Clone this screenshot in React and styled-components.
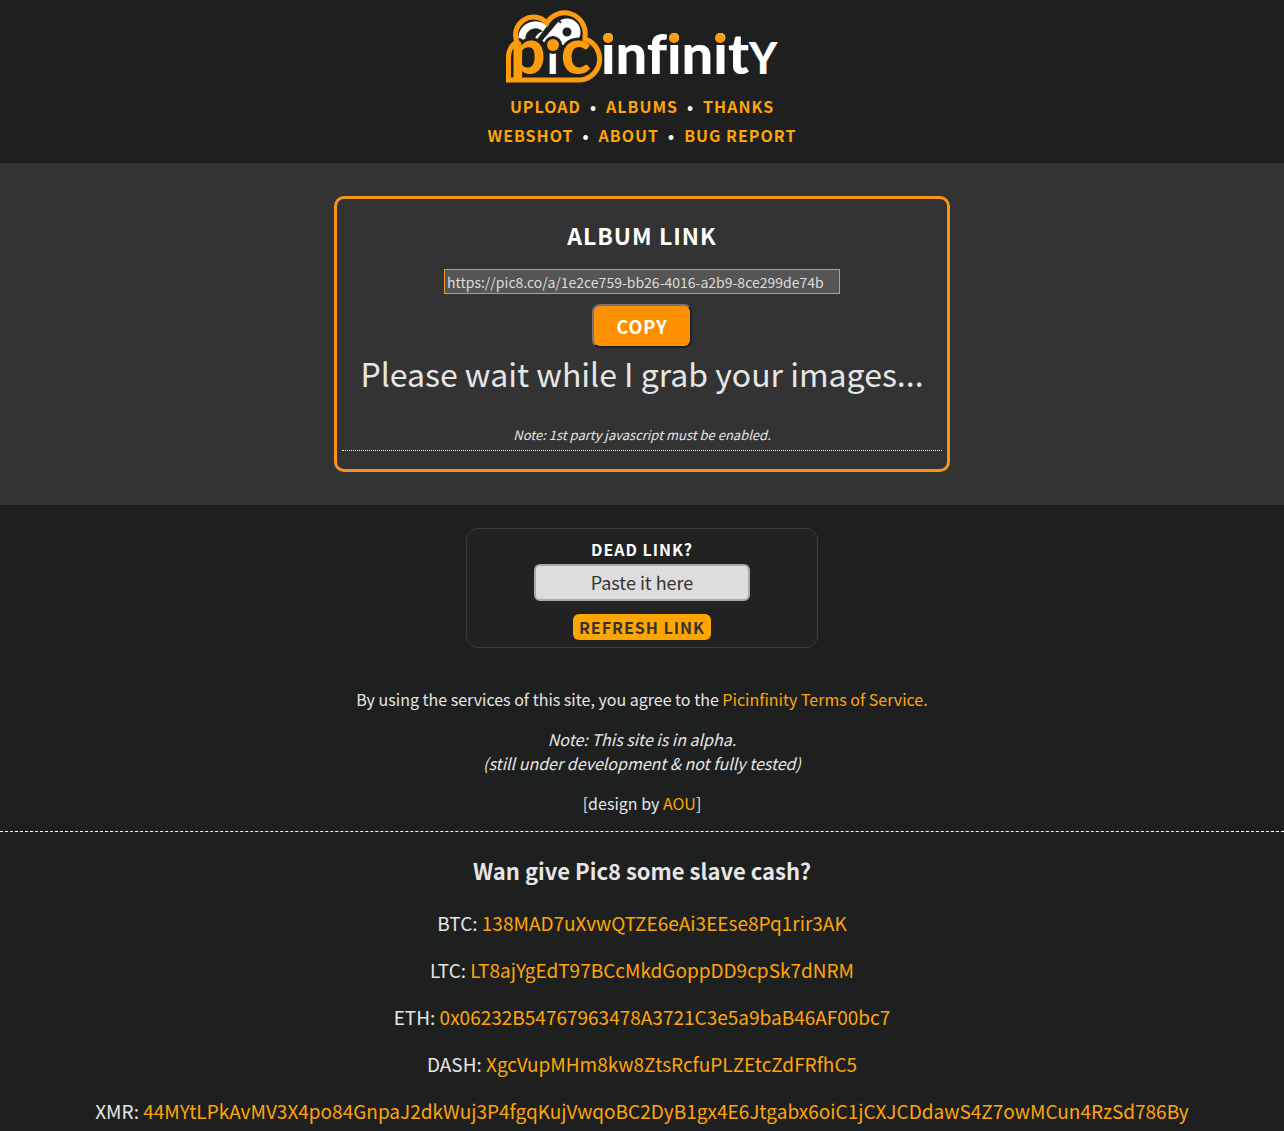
import React from 'react';
import styled, { createGlobalStyle } from 'styled-components';

const GlobalStyle = createGlobalStyle`
    * {
        box-sizing: border-box;
    }

    body {
        margin: 0;
        background: #1e201f;
        color: #e6e6e6;
        font-family: "Noto Sans CJK JP", "Noto Sans", sans-serif;
        font-size: 16px;
        line-height: 24px;
        text-align: center;
        overflow-x: hidden;
    }

    button, input {
        font-family: inherit;
    }

    a {
        color: #ffa50a;
        text-decoration: none;
    }
`;

const navRows = [
    ['Upload', 'Albums', 'Thanks'],
    ['Webshot', 'About', 'Bug Report'],
];

const coins = [
    { name: 'BTC', address: '138MAD7uXvwQTZE6eAi3EEse8Pq1rir3AK' },
    { name: 'LTC', address: 'LT8ajYgEdT97BCcMkdGoppDD9cpSk7dNRM' },
    { name: 'ETH', address: '0x06232B54767963478A3721C3e5a9baB46AF00bc7' },
    { name: 'DASH', address: 'XgcVupMHm8kw8ZtsRcfuPLZEtcZdFRfhC5' },
    {
        name: 'XMR',
        address: '44MYtLPkAvMV3X4po84GnpaJ2dkWuj3P4fgqKujVwqoBC2DyB1gx4E6Jtgabx6oiC1jCXJCDdawS4Z7owMCun4RzSd786By',
    },
];

const Logo = () => (
    <LogoSvg viewBox="0 0 276 76" role="img" aria-label="picinfinity">
        {/* infinity loops */}
        <g fill="none" stroke="#fff">
            <path d="M20 37 A13 13 0 0 1 43 22" strokeWidth="7" />
            <path d="M42 25 Q36 24 33 31" strokeWidth="5" />
            <circle cx="63" cy="23" r="9" strokeWidth="9" />
            <path d="M36 34 L54 10" stroke="#1e201f" strokeWidth="9" />
            <path d="M41 34 L57 15" strokeWidth="7" />
        </g>
        <PicText y="65">
            <tspan x="6">p</tspan>
            <tspan x="57">c</tspan>
            <tspan x="43" fontSize="44" fill="#fff">i</tspan>
        </PicText>
        <circle cx="49" cy="36" r="9" fill="#1e201f" />
        <circle cx="49" cy="36" r="6" fill="#ff9c0d" />
        {/* cloud */}
        <rect x="0" y="73" width="90" height="3" fill="#1e201f" />
        <path
            d="M4.5 71 V48 Q4.5 38 13 33 A18 18 0 0 1 43 14 A20.5 20.5 0 0 1 81 27 L81 30 A21 21 0 0 1 74 71 Z"
            fill="none" stroke="#ff9c0d" strokeWidth="5"
        />
        <InfinityText x="97" y="65">infinit<tspan fontSize="43">Y</tspan></InfinityText>
        <g fill="#ff9c0d">
            <circle cx="104" cy="29" r="5" />
            <circle cx="170" cy="29" r="5" />
            <circle cx="216" cy="29" r="5" />
        </g>
    </LogoSvg>
);

const App = () => {
    return (
        <>
            <GlobalStyle />
            <Header>
                <a href="#home"><Logo /></a>
                <nav>
                    {navRows.map((row) => (
                        <NavRow key={row[0]}>
                            {row.map((item) => (
                                <li key={item}><a href={`#${item}`}>{item}</a></li>
                            ))}
                        </NavRow>
                    ))}
                </nav>
            </Header>

            <Main>
                <AlbumBox>
                    <AlbumTitle>Album Link</AlbumTitle>
                    <AlbumUrl
                        type="text"
                        aria-label="Album link"
                        readOnly
                        value="https://pic8.co/a/1e2ce759-bb26-4016-a2b9-8ce299de74b"
                    />
                    <CopyButton type="button">Copy</CopyButton>
                    <Status>Please wait while I grab your images...</Status>
                    <ScriptNote>Note: 1st party javascript must be enabled.</ScriptNote>
                </AlbumBox>
            </Main>

            <footer>
                <DeadLink>
                    <label htmlFor="dead-link">Dead Link?</label>
                    <PasteInput id="dead-link" type="text" placeholder="Paste it here" />
                    <RefreshButton type="submit">Refresh Link</RefreshButton>
                </DeadLink>
                <Legal>
                    <p>
                        By using the services of this site, you agree to the{' '}
                        <a href="#terms">Picinfinity Terms of Service.</a>
                    </p>
                    <p>
                        <em>Note: This site is in alpha.<br />(still under development &amp; not fully tested)</em>
                    </p>
                    <p>[design by <a href="#aou">AOU</a>]</p>
                </Legal>
                <Donate>
                    <h2>Wan give Pic8 some slave cash?</h2>
                    {coins.map(({ name, address }) => (
                        <p key={name}>{name}: <a href={`#${name}`}>{address}</a></p>
                    ))}
                </Donate>
            </footer>
        </>
    );
};

const Header = styled.header`
    display: flex;
    flex-direction: column;
    align-items: center;
    padding: 9px 0 13px;
`;

const LogoSvg = styled.svg`
    display: block;
    width: 276px;
    height: 76px;
    margin-bottom: 7px;
    overflow: visible;
`;

const InfinityText = styled.text`
    fill: #fff;
    font-family: Lato, sans-serif;
    font-size: 56px;
    font-weight: 900;
    font-variant-ligatures: none;
`;

const PicText = styled(InfinityText)`
    fill: #ff9c0d;
    stroke: #1e201f;
    stroke-width: 6px;
    font-size: 62px;
    paint-order: stroke;
`;

const NavRow = styled.ul`
    display: flex;
    justify-content: center;
    margin: 0;
    padding: 0;
    list-style: none;
    font-weight: bold;
    letter-spacing: 1px;
    line-height: 29px;
    text-transform: uppercase;

    li + li::before {
        content: "•";
        margin: 0 9px;
        color: #fff;
    }
`;

const Main = styled.main`
    padding: 33px 16px;
    background: #333;
`;

const AlbumBox = styled.section`
    display: flex;
    flex-direction: column;
    align-items: center;
    max-width: 616px;
    margin: 0 auto;
    padding: 18px 5px;
    border: 3px solid #f7941d;
    border-radius: 10px;
`;

const AlbumTitle = styled.h1`
    margin: 0 0 16px;
    color: #fff;
    font-size: 23px;
    letter-spacing: 1px;
    line-height: 36px;
    text-transform: uppercase;
`;

const AlbumUrl = styled.input`
    width: 396px;
    max-width: 100%;
    height: 25px;
    padding: 1px 2px;
    border: 1px solid #f7941d;
    background: #555;
    color: #ddd;
    font-size: 14px;
`;

const CopyButton = styled.button`
    width: 100px;
    height: 44px;
    margin: 10px 0 5px;
    padding: 0;
    border: 2px solid;
    border-color: #767676 #212121 #212121 #767676;
    border-radius: 8px;
    background: #ff9000;
    color: #fff;
    font-size: 18px;
    font-weight: bold;
    letter-spacing: 1px;
    text-transform: uppercase;
`;

const Status = styled.p`
    margin: 0 0 32px;
    font-size: 32px;
    line-height: 40px;
`;

const ScriptNote = styled.p`
    width: 100%;
    margin: 0;
    padding-bottom: 5px;
    border-bottom: 1px dotted #fff;
    font-size: 13px;
    font-style: italic;
    line-height: 20px;
`;

const DeadLink = styled.form`
    display: flex;
    flex-direction: column;
    align-items: center;
    max-width: 352px;
    margin: 23px auto 39px;
    padding: 8px 8px 7px;
    border: 1px solid #3c3c3c;
    border-radius: 12px;
    background: #222;

    label {
        margin-bottom: 3px;
        color: #fff;
        font-weight: bold;
        letter-spacing: 1px;
        text-transform: uppercase;
    }
`;

const PasteInput = styled.input`
    width: 216px;
    height: 37px;
    padding: 0 4px 2px;
    border: 2px solid #aaa;
    border-radius: 6px;
    background: #ddd;
    font-size: 18px;
    text-align: center;

    &::placeholder {
        color: #333;
    }
`;

const RefreshButton = styled.button`
    height: 26px;
    margin-top: 13px;
    padding: 0 6px;
    border: 0;
    border-radius: 6px;
    background: #ffa500;
    color: #333;
    font-size: 16px;
    font-weight: bold;
    letter-spacing: 1px;
    line-height: 26px;
    text-transform: uppercase;
`;

const Legal = styled.div`
    padding: 0 8px 16px;
    border-bottom: 1px dashed #fff;

    p {
        margin: 0 0 16px;
    }

    p:last-child {
        margin: 0;
    }
`;

const Donate = styled.section`
    padding: 20px 8px 0;
    font-size: 19px;
    line-height: 28px;
    overflow-wrap: anywhere;

    h2 {
        margin: 0 0 21px;
        font-size: 22px;
        line-height: 36px;
    }

    p {
        margin: 0 0 19px;
    }
`;

export default App;
